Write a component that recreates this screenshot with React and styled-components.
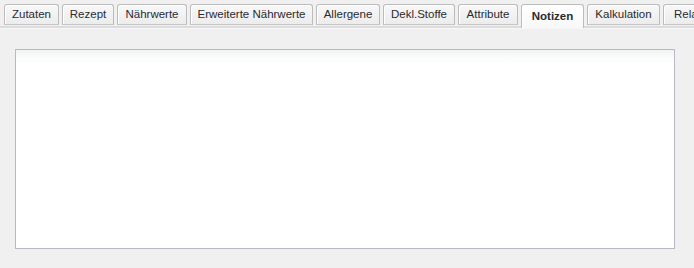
import React from "react";
import styled, { createGlobalStyle } from "styled-components";

const Global = createGlobalStyle`
  html, body { margin: 0; padding: 0; background: #f0f0f0; }
  body { font-family: "Liberation Sans", Arial, sans-serif; overflow: hidden; }
`;

const Page = styled.div`
  width: 694px;
  height: 268px;
  background: #f0f0f0;
  overflow: hidden;
`;

const TabBar = styled.div`
  display: flex;
  align-items: flex-start;
  gap: 3px;
  padding: 4px 0 0 4px;
  height: 22px;
  border-bottom: 2px solid #dcdcdc;
  box-shadow: 0 1px 0 #f7f7f7;
  white-space: nowrap;
`;

const Tab = styled.div`
  flex: none;
  box-sizing: border-box;
  width: ${(p) => p.$w}px;
  height: ${(p) => (p.$active ? 24 : 21)}px;
  margin-bottom: ${(p) => (p.$active ? -2 : 0)}px;
  display: flex;
  align-items: center;
  justify-content: ${(p) => (p.$clip ? "flex-start" : "center")};
  padding: ${(p) => (p.$clip ? "0 0 2px 10px" : "0 0 2px 0")};
  font-size: 11.5px;
  font-weight: ${(p) => (p.$active ? 700 : 400)};
  color: #2a2a30;
  border: 1px solid #bcbcbc;
  border-bottom: ${(p) => (p.$active ? "none" : "1px solid #c6c6c6")};
  border-radius: 3px 3px 0 0;
  background: ${(p) =>
    p.$active
      ? "linear-gradient(#ffffff, #f8f8f8)"
      : "linear-gradient(#f8f8f8, #ececec)"};
  box-shadow: inset 1px 1px 0 #ffffff;
`;

const Body = styled.div`
  padding: 21px 19px 0 15px;
`;

const Notes = styled.textarea`
  display: block;
  box-sizing: border-box;
  width: 660px;
  height: 200px;
  margin: 0;
  resize: none;
  border: 1px solid #b7b8c9;
  border-radius: 0;
  background: linear-gradient(#f0f2f2 0px, #fbfcfc 8px, #ffffff 16px);
  outline: none;
  font-family: "Liberation Sans", Arial, sans-serif;
  font-size: 12px;
`;

const tabs = [
  { label: "Zutaten", w: 55 },
  { label: "Rezept", w: 52 },
  { label: "Nährwerte", w: 70 },
  { label: "Erweiterte Nährwerte", w: 123 },
  { label: "Allergene", w: 64 },
  { label: "Dekl.Stoffe", w: 72 },
  { label: "Attribute", w: 60 },
  { label: "Notizen", w: 63, active: true },
  { label: "Kalkulation", w: 73 },
  { label: "Relationen", w: 80, clip: true },
];

export default function App() {
  return (
    <Page>
      <Global />
      <TabBar>
        {tabs.map((t) => (
          <Tab key={t.label} $w={t.w} $active={t.active} $clip={t.clip}>
            {t.label}
          </Tab>
        ))}
      </TabBar>
      <Body>
        <Notes defaultValue="" />
      </Body>
    </Page>
  );
}
